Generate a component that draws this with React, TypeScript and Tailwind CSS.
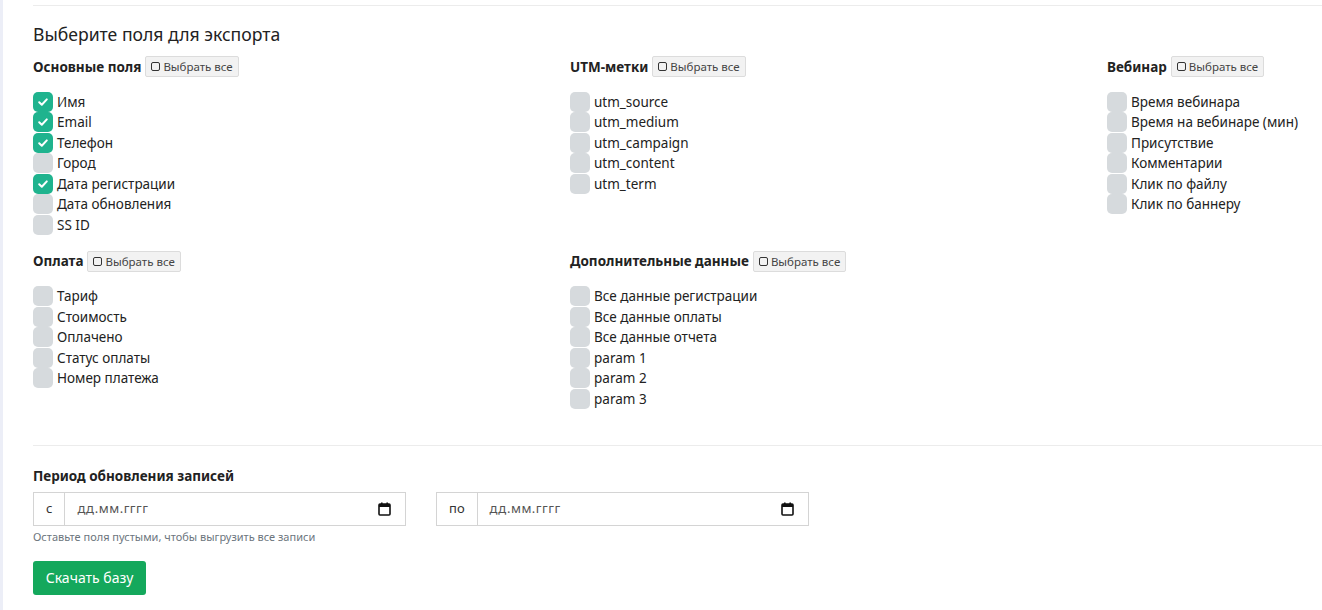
import React, { useState } from 'react';

type Field = { label: string; checked?: boolean };
type Section = { title: string; fields: Field[] };

const sections: Section[] = [
  {
    title: 'Основные поля',
    fields: [
      { label: 'Имя', checked: true },
      { label: 'Email', checked: true },
      { label: 'Телефон', checked: true },
      { label: 'Город' },
      { label: 'Дата регистрации', checked: true },
      { label: 'Дата обновления' },
      { label: 'SS ID' },
    ],
  },
  {
    title: 'UTM-метки',
    fields: [
      { label: 'utm_source' },
      { label: 'utm_medium' },
      { label: 'utm_campaign' },
      { label: 'utm_content' },
      { label: 'utm_term' },
    ],
  },
  {
    title: 'Вебинар',
    fields: [
      { label: 'Время вебинара' },
      { label: 'Время на вебинаре (мин)' },
      { label: 'Присутствие' },
      { label: 'Комментарии' },
      { label: 'Клик по файлу' },
      { label: 'Клик по баннеру' },
    ],
  },
  {
    title: 'Оплата',
    fields: [
      { label: 'Тариф' },
      { label: 'Стоимость' },
      { label: 'Оплачено' },
      { label: 'Статус оплаты' },
      { label: 'Номер платежа' },
    ],
  },
  {
    title: 'Дополнительные данные',
    fields: [
      { label: 'Все данные регистрации' },
      { label: 'Все данные оплаты' },
      { label: 'Все данные отчета' },
      { label: 'param 1' },
      { label: 'param 2' },
      { label: 'param 3' },
    ],
  },
];

function Checkbox({ checked, onClick }: { checked: boolean; onClick: () => void }) {
  return (
    <span
      onClick={onClick}
      className={`flex h-[20px] w-[20px] shrink-0 items-center justify-center rounded-[5px] ${
        checked ? 'bg-[#1fb38e]' : 'bg-[#d6dadd]'
      }`}
    >
      {checked && (
        <svg width="12" height="12" viewBox="0 0 12 12" fill="none">
          <path d="M2.2 6.3 L4.8 8.8 L9.8 3.4" stroke="white" strokeWidth="2" strokeLinecap="round" strokeLinejoin="round" />
        </svg>
      )}
    </span>
  );
}

function SelectAllButton() {
  return (
    <button className="ml-[4px] flex h-[21px] items-center gap-[3px] rounded-[2px] border border-[#dcdcdc] bg-[#f2f2f2] px-[5px] text-[11.5px] text-[#444]">
      <span className="inline-block h-[9px] w-[9px] rounded-[2px] border border-[#333]" />
      Выбрать все
    </button>
  );
}

function FieldSection({ section }: { section: Section }) {
  const [state, setState] = useState(section.fields.map((f) => !!f.checked));
  return (
    <div className="mb-[16px]">
      <div className="flex items-center">
        <span className="text-[13.5px] font-bold text-[#222]">{section.title}</span>
        <SelectAllButton />
      </div>
      <div className="mt-[14px] flex flex-col">
        {section.fields.map((f, i) => (
          <label key={f.label} className="flex h-[20.5px] items-center gap-[4px] text-[13.5px] text-[#222]">
            <Checkbox
              checked={state[i]}
              onClick={() => setState((s) => s.map((v, j) => (j === i ? !v : v)))}
            />
            {f.label}
          </label>
        ))}
      </div>
    </div>
  );
}

function CalendarIcon() {
  return (
    <svg width="13" height="14" viewBox="0 0 13 14">
      <rect x="1" y="2" width="11" height="11" rx="1" fill="none" stroke="#111" strokeWidth="1.6" />
      <rect x="1" y="2" width="11" height="3" fill="#111" />
      <rect x="3" y="0.5" width="1.6" height="2.5" fill="#111" />
      <rect x="8.4" y="0.5" width="1.6" height="2.5" fill="#111" />
    </svg>
  );
}

function DateGroup({ prefix }: { prefix: string }) {
  return (
    <div className="flex h-[34px] w-[373px] border border-[#d4d4d4] text-[13px]">
      <span className="flex items-center border-r border-[#d4d4d4] px-[12px] text-[#333]">{prefix}</span>
      <span className="flex flex-1 items-center justify-between pl-[12px] pr-[14px] tracking-[0.5px] text-[#555]">
        дд.мм.гггг
        <CalendarIcon />
      </span>
    </div>
  );
}

export default function App() {
  return (
    <div
      className="flex min-h-[610px] w-screen overflow-hidden bg-white"
      style={{ fontFamily: '"Noto Sans", "Open Sans", sans-serif' }}
    >
      <div className="w-[3px] shrink-0 bg-[#eceef7]" />
      <div className="w-[1700px] shrink-0 pl-[30px]">
        <div className="mt-[5px] border-t border-[#ececec]" />

        <h2 className="mt-[15px] text-[17.6px] text-[#222]">Выберите поля для экспорта</h2>

        <div className="mt-[9px] grid grid-cols-[537px_537px_537px]">
          {sections.map((s) => (
            <FieldSection key={s.title} section={s} />
          ))}
        </div>

        <div className="mt-[20px] border-t border-[#ececec]" />

        <div className="mt-[20px] text-[13.5px] font-bold text-[#222]">Период обновления записей</div>
        <div className="mt-[6px] flex gap-[30px]">
          <DateGroup prefix="с" />
          <DateGroup prefix="по" />
        </div>
        <div className="mt-[3px] text-[11px] text-[#6c757d]">Оставьте поля пустыми, чтобы выгрузить все записи</div>

        <button className="mt-[15px] h-[34px] w-[113px] rounded-[3px] bg-[#14a85c] text-[14px] text-white">
          Скачать базу
        </button>
      </div>
    </div>
  );
}
